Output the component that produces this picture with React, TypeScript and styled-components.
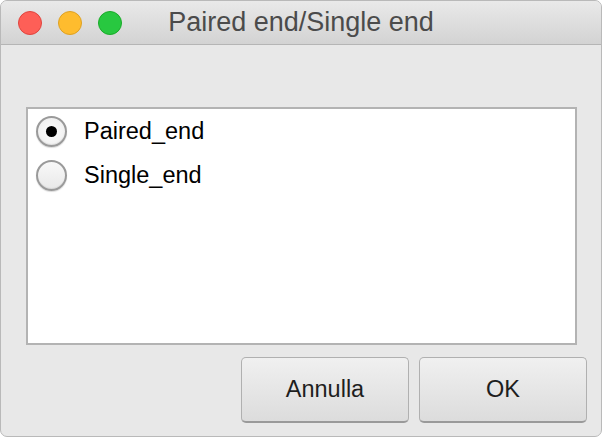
import React, { FC, useState } from 'react';
import styled, { createGlobalStyle } from 'styled-components';

const GlobalStyle = createGlobalStyle`
  html, body {
    margin: 0;
    padding: 0;
    background: #ffffff;
  }
  body {
    font-family: "Liberation Sans", Arial, sans-serif;
  }
`;

const Window = styled.div`
  width: 602px;
  height: 437px;
  display: flex;
  flex-direction: column;
  background-color: #e8e8e8;
  border: 1px solid #b9b9b9;
  border-radius: 7px;
  overflow: hidden;
  box-sizing: border-box;
`;

const TitleBar = styled.div`
  height: 44px;
  flex-shrink: 0;
  display: flex;
  align-items: center;
  position: relative;
  padding-left: 17px;
  background: linear-gradient(to bottom, #e9e9e9, #d3d3d3);
  border-bottom: 1px solid #b5b5b5;
  box-sizing: border-box;
`;

const Lights = styled.div`
  display: flex;
  gap: 16px;
`;

const Light = styled.span<{ $fill: string; $edge: string }>`
  width: 24px;
  height: 24px;
  border-radius: 50%;
  background-color: ${p => p.$fill};
  border: 1px solid ${p => p.$edge};
  box-sizing: border-box;
`;

const Title = styled.div`
  position: absolute;
  left: 0;
  right: 0;
  top: 0;
  bottom: 0;
  display: flex;
  align-items: center;
  justify-content: center;
  font-size: 27px;
  color: #4b4b4b;
  pointer-events: none;
`;

const Body = styled.div`
  flex: 1;
  display: flex;
  flex-direction: column;
  padding: 62px 14px 14px 25px;
`;

const ListBox = styled.div`
  height: 238px;
  margin-right: 10px;
  background-color: #ffffff;
  border: 2px solid #b3b3b3;
  box-sizing: border-box;
  display: flex;
  flex-direction: column;
`;

const Option = styled.label`
  height: 44px;
  display: flex;
  align-items: center;
  gap: 17px;
  padding-left: 8px;
  font-size: 23.5px;
  color: #000000;
  cursor: default;
`;

const Radio = styled.span<{ $checked: boolean }>`
  width: 31px;
  height: 31px;
  border-radius: 50%;
  box-sizing: border-box;
  border: 2px solid #9a9a9a;
  background: ${p =>
    p.$checked
      ? 'radial-gradient(circle, #fdfdfd 0%, #f3f3f3 60%, #e6e6e6 100%)'
      : 'linear-gradient(to bottom, #f8f8f8, #e9e9e9)'};
  box-shadow: inset 0 -1px 1px rgba(0, 0, 0, 0.08), 0 1px 1px rgba(0, 0, 0, 0.15);
  display: flex;
  align-items: center;
  justify-content: center;

  &::after {
    content: '';
    display: ${p => (p.$checked ? 'block' : 'none')};
    width: 11px;
    height: 11px;
    border-radius: 50%;
    background-color: #000000;
  }
`;

const ButtonRow = styled.div`
  display: flex;
  justify-content: flex-end;
  gap: 10px;
  margin-top: 12px;
`;

const Button = styled.button`
  width: 168px;
  height: 66px;
  border: 1px solid #b0b0b0;
  border-bottom: 2px solid #9a9a9a;
  border-radius: 5px;
  background: linear-gradient(to bottom, #f0f0f0, #dcdcdc);
  font-family: "Liberation Sans", Arial, sans-serif;
  font-size: 23.5px;
  color: #1e1e1e;
  box-sizing: border-box;
  padding: 0;
`;

const options = ['Paired_end', 'Single_end'];

const App: FC = () => {
  const [selected, setSelected] = useState<string>('Paired_end');

  return (
    <>
      <GlobalStyle />
      <Window>
        <TitleBar>
          <Lights>
            <Light $fill="#fe5f57" $edge="#e0443e" />
            <Light $fill="#febc2e" $edge="#dea123" />
            <Light $fill="#28c840" $edge="#1aab29" />
          </Lights>
          <Title>Paired end/Single end</Title>
        </TitleBar>
        <Body>
          <ListBox>
            {options.map(o => (
              <Option key={o} onClick={() => setSelected(o)}>
                <Radio $checked={selected === o} />
                {o}
              </Option>
            ))}
          </ListBox>
          <ButtonRow>
            <Button>Annulla</Button>
            <Button>OK</Button>
          </ButtonRow>
        </Body>
      </Window>
    </>
  );
};

export default App;
